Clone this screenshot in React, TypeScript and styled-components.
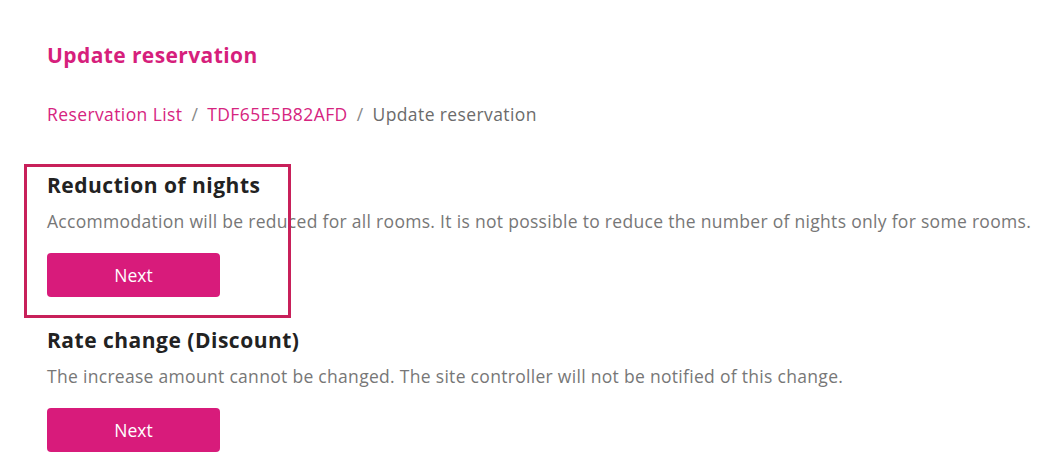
import { createGlobalStyle, styled } from "styled-components"

const GlobalStyle = createGlobalStyle`
    body {
        margin: 0;
        background: #ffffff;
        font-family: "Open Sans", "Noto Sans", sans-serif;
    }
`

const Page = styled.div`
    width: 1032px;
    height: 460px;
    overflow: hidden;
    padding-left: 47px;
    box-sizing: border-box;
    display: flex;
    flex-direction: column;
`

const Title = styled.h1`
    margin: 43px 0 0;
    font-size: 21px;
    line-height: 24px;
    letter-spacing: 0.4px;
    font-weight: 700;
    color: #d61f7c;
`

const Breadcrumb = styled.nav`
    margin-top: 35px;
    display: flex;
    gap: 9px;
    font-size: 17.5px;
    line-height: 24px;
    letter-spacing: 0.4px;
    white-space: nowrap;
`

const Crumb = styled.span<{ $current?: boolean }>`
    color: ${(p) => (p.$current ? "#6b6b6b" : "#d6247f")};
`

const Sep = styled.span`
    color: #888;
`

const Section = styled.section<{ $top: number }>`
    position: relative;
    margin-top: ${(p) => p.$top}px;
    display: flex;
    flex-direction: column;
    align-items: flex-start;
`

const SectionTitle = styled.h2`
    margin: 0;
    font-size: 21px;
    line-height: 24px;
    letter-spacing: 0.5px;
    font-weight: 700;
    color: #222;
`

const Desc = styled.p`
    margin: 12px 0 0;
    font-size: 17.5px;
    line-height: 24px;
    letter-spacing: 0.3px;
    color: #777;
    white-space: nowrap;
`

const NextButton = styled.button`
    margin-top: 20px;
    width: 173px;
    height: 44px;
    border: none;
    border-radius: 4px;
    background: #d81b7b;
    color: #fff;
    font-family: inherit;
    font-size: 17.5px;
    cursor: pointer;
`

const Highlight = styled.div`
    position: absolute;
    top: -9px;
    left: -23px;
    width: 267px;
    height: 154px;
    box-sizing: border-box;
    border: 3px solid #c8205a;
    pointer-events: none;
`

export default function App() {
    return (
        <>
            <GlobalStyle />
            <Page>
                <Title>Update reservation</Title>
                <Breadcrumb>
                    <Crumb>Reservation List</Crumb>
                    <Sep>/</Sep>
                    <Crumb>TDF65E5B82AFD</Crumb>
                    <Sep>/</Sep>
                    <Crumb $current>Update reservation</Crumb>
                </Breadcrumb>
                <Section $top={47}>
                    <SectionTitle>Reduction of nights</SectionTitle>
                    <Desc>
                        Accommodation will be reduced for all rooms. It is not possible to reduce the number of nights only for some rooms. For details, please contact the facility.
                    </Desc>
                    <NextButton>Next</NextButton>
                    <Highlight />
                </Section>
                <Section $top={31}>
                    <SectionTitle>Rate change (Discount)</SectionTitle>
                    <Desc>The increase amount cannot be changed. The site controller will not be notified of this change.</Desc>
                    <NextButton>Next</NextButton>
                </Section>
            </Page>
        </>
    )
}
